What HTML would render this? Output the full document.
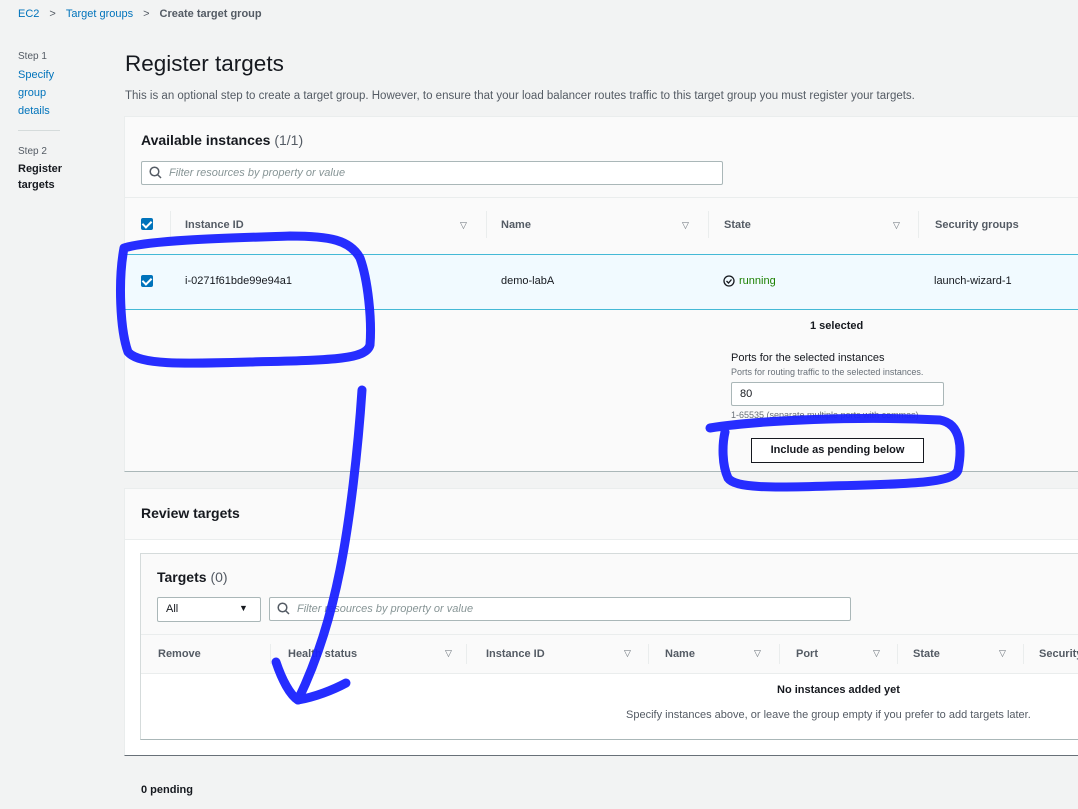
<!DOCTYPE html>
<html><head><meta charset="utf-8"><style>
*{box-sizing:border-box;margin:0;padding:0}
body{width:1078px;height:809px;overflow:hidden;background:#f2f3f3;font-family:"Liberation Sans",Arial,sans-serif;color:#16191f;position:relative}
.a{position:absolute;white-space:nowrap}
.lnk{color:#0073bb}
.b{font-weight:bold}
.hd{font-size:11px;font-weight:bold;color:#545b64}
.sep{position:absolute;width:1px;background:#eaeded}
.tri{position:absolute;font-size:9px;color:#687078}
.cb{position:absolute;width:12px;height:12px;background:#0073bb;border-radius:2px}
.cb:after{content:"";position:absolute;left:3px;top:1px;width:4px;height:7px;border:solid #fff;border-width:0 2px 2px 0;transform:rotate(45deg)}
.inp{position:absolute;background:#fff;border:1px solid #aab7b8;border-radius:2px}
.ph{font-style:italic;color:#879596;font-size:11px}
</style></head><body>
<div class="a" style="left:18px;top:8px;font-size:11px"><span class="lnk">EC2</span><span style="color:#545b64;margin:0 10px">&gt;</span><span class="lnk">Target groups</span><span style="color:#545b64;margin:0 10px">&gt;</span><span class="b" style="color:#545b64">Create target group</span></div>
<div class="a" style="left:18px;top:51px;font-size:10px;color:#545b64">Step 1</div>
<div class="a lnk" style="left:18px;top:66px;font-size:11px;line-height:18px">Specify<br>group<br>details</div>
<div class="a" style="left:18px;top:130px;width:42px;height:1px;background:#d5dbdb"></div>
<div class="a" style="left:18px;top:146px;font-size:10px;color:#545b64">Step 2</div>
<div class="a b" style="left:18px;top:161px;font-size:11px;line-height:16px">Register<br>targets</div>
<div class="a" style="left:125px;top:51px;font-size:22.5px">Register targets</div>
<div class="a" style="left:125px;top:90px;font-size:11.5px;color:#545b64">This is an optional step to create a target group. However, to ensure that your load balancer routes traffic to this target group you must register your targets.</div>

<div class="a" style="left:124px;top:116px;width:960px;height:356px;background:#fafafa;border:1px solid #eaeded;border-bottom:1px solid #aab7b8"></div>
<div class="a" style="left:125px;top:197px;width:960px;height:1px;background:#eaeded"></div>
<div class="a b" style="left:141px;top:132px;font-size:14px">Available instances <span style="font-weight:normal;color:#545b64">(1/1)</span></div>
<div class="inp" style="left:141px;top:161px;width:582px;height:24px"></div>
<svg class="a" style="left:149px;top:166px" width="13" height="13"><circle cx="5.5" cy="5.5" r="4.3" fill="none" stroke="#545b64" stroke-width="1.5"/><line x1="8.6" y1="8.6" x2="12" y2="12" stroke="#545b64" stroke-width="1.5"/></svg>
<div class="a ph" style="left:169px;top:167px">Filter resources by property or value</div>
<div class="cb" style="left:141px;top:218px"></div>
<div class="sep" style="left:170px;top:211px;height:27px"></div>
<div class="a hd" style="left:185px;top:219px">Instance ID</div><div class="tri" style="left:460px;top:220px">▽</div>
<div class="sep" style="left:486px;top:211px;height:27px"></div>
<div class="a hd" style="left:501px;top:219px">Name</div><div class="tri" style="left:682px;top:220px">▽</div>
<div class="sep" style="left:708px;top:211px;height:27px"></div>
<div class="a hd" style="left:724px;top:219px">State</div><div class="tri" style="left:893px;top:220px">▽</div>
<div class="sep" style="left:918px;top:211px;height:27px"></div>
<div class="a hd" style="left:935px;top:219px">Security groups</div>
<div class="a" style="left:125px;top:254px;width:960px;height:56px;background:#f1faff;border-top:1px solid #44b9d6;border-bottom:1px solid #44b9d6"></div>
<div class="cb" style="left:141px;top:275px"></div>
<div class="a" style="left:185px;top:275px;font-size:11px">i-0271f61bde99e94a1</div>
<div class="a" style="left:501px;top:275px;font-size:11px">demo-labA</div>
<svg class="a" style="left:723px;top:275px" width="12" height="12"><circle cx="6" cy="6" r="5" fill="none" stroke="#16191f" stroke-width="1.3"/><path d="M3.5 6l2 2 3-3.5" fill="none" stroke="#16191f" stroke-width="1.3"/></svg>
<div class="a" style="left:739px;top:275px;font-size:11px;color:#1d8102">running</div>
<div class="a" style="left:934px;top:275px;font-size:11px">launch-wizard-1</div>
<div class="a b" style="left:810px;top:320px;font-size:11px">1 selected</div>
<div class="a" style="left:731px;top:352px;font-size:11px">Ports for the selected instances</div>
<div class="a" style="left:731px;top:367px;font-size:9px;color:#687078">Ports for routing traffic to the selected instances.</div>
<div class="inp" style="left:731px;top:382px;width:213px;height:24px"></div>
<div class="a" style="left:740px;top:388px;font-size:11px">80</div>
<div class="a" style="left:731px;top:410px;font-size:9px;color:#687078">1-65535 (separate multiple ports with commas)</div>
<div class="a b" style="left:751px;top:438px;width:173px;height:25px;border:1px solid #16191f;background:#fff;font-size:11px;text-align:center;line-height:23px">Include as pending below</div>

<div class="a" style="left:124px;top:488px;width:960px;height:268px;background:#fff;border:1px solid #eaeded;border-bottom:1px solid #687078"></div>
<div class="a" style="left:125px;top:489px;width:960px;height:51px;background:#fafafa;border-bottom:1px solid #eaeded"></div>
<div class="a b" style="left:141px;top:505px;font-size:14px">Review targets</div>
<div class="a" style="left:140px;top:553px;width:945px;height:187px;background:#fff;border:1px solid #d5dbdb;border-bottom:1px solid #aab7b8"></div>
<div class="a" style="left:141px;top:554px;width:944px;height:119px;background:#fafafa"></div>
<div class="a" style="left:141px;top:634px;width:944px;height:1px;background:#eaeded"></div>
<div class="a" style="left:141px;top:673px;width:944px;height:1px;background:#eaeded"></div>
<div class="a b" style="left:157px;top:569px;font-size:14px">Targets <span style="font-weight:normal;color:#545b64">(0)</span></div>
<div class="inp" style="left:157px;top:597px;width:104px;height:25px"></div>
<div class="a" style="left:166px;top:603px;font-size:11px">All</div>
<div class="a" style="left:239px;top:603px;font-size:9px;color:#16191f">▼</div>
<div class="inp" style="left:269px;top:597px;width:582px;height:24px"></div>
<svg class="a" style="left:277px;top:602px" width="13" height="13"><circle cx="5.5" cy="5.5" r="4.3" fill="none" stroke="#545b64" stroke-width="1.5"/><line x1="8.6" y1="8.6" x2="12" y2="12" stroke="#545b64" stroke-width="1.5"/></svg>
<div class="a ph" style="left:297px;top:603px">Filter resources by property or value</div>
<div class="a hd" style="left:158px;top:648px">Remove</div>
<div class="sep" style="left:270px;top:644px;height:20px"></div>
<div class="a hd" style="left:288px;top:648px">Health status</div><div class="tri" style="left:445px;top:648px">▽</div>
<div class="sep" style="left:466px;top:644px;height:20px"></div>
<div class="a hd" style="left:486px;top:648px">Instance ID</div><div class="tri" style="left:624px;top:648px">▽</div>
<div class="sep" style="left:648px;top:644px;height:20px"></div>
<div class="a hd" style="left:665px;top:648px">Name</div><div class="tri" style="left:754px;top:648px">▽</div>
<div class="sep" style="left:779px;top:644px;height:20px"></div>
<div class="a hd" style="left:796px;top:648px">Port</div><div class="tri" style="left:873px;top:648px">▽</div>
<div class="sep" style="left:897px;top:644px;height:20px"></div>
<div class="a hd" style="left:913px;top:648px">State</div><div class="tri" style="left:999px;top:648px">▽</div>
<div class="sep" style="left:1023px;top:644px;height:20px"></div>
<div class="a hd" style="left:1039px;top:648px">Security</div>
<div class="a b" style="left:777px;top:684px;font-size:11px">No instances added yet</div>
<div class="a" style="left:626px;top:709px;font-size:11px;color:#545b64">Specify instances above, or leave the group empty if you prefer to add targets later.</div>
<div class="a b" style="left:141px;top:784px;font-size:11px">0 pending</div>

<svg class="a" style="left:0;top:0" width="1078" height="809">
<g fill="none" stroke="#1a22ff" stroke-width="9" stroke-linecap="round" stroke-linejoin="round" opacity="0.95">
<path d="M124 248 C150 240 230 238 290 236 C330 236 350 240 360 258 C368 280 372 320 370 345 C366 360 330 360 250 362 C180 364 140 365 128 352 C120 330 118 280 124 248 Z"/>
<path d="M710 428 C760 420 860 416 940 420 C962 424 962 450 958 470 C954 482 920 484 830 486 C770 488 735 488 728 478 C722 465 722 445 725 432"/>
<path d="M362 390 C358 450 350 520 340 570 C330 620 315 665 298 700"/>
<path d="M276 662 C282 680 290 695 298 700 C315 697 333 690 346 683"/>
</g></svg>
</body></html>
